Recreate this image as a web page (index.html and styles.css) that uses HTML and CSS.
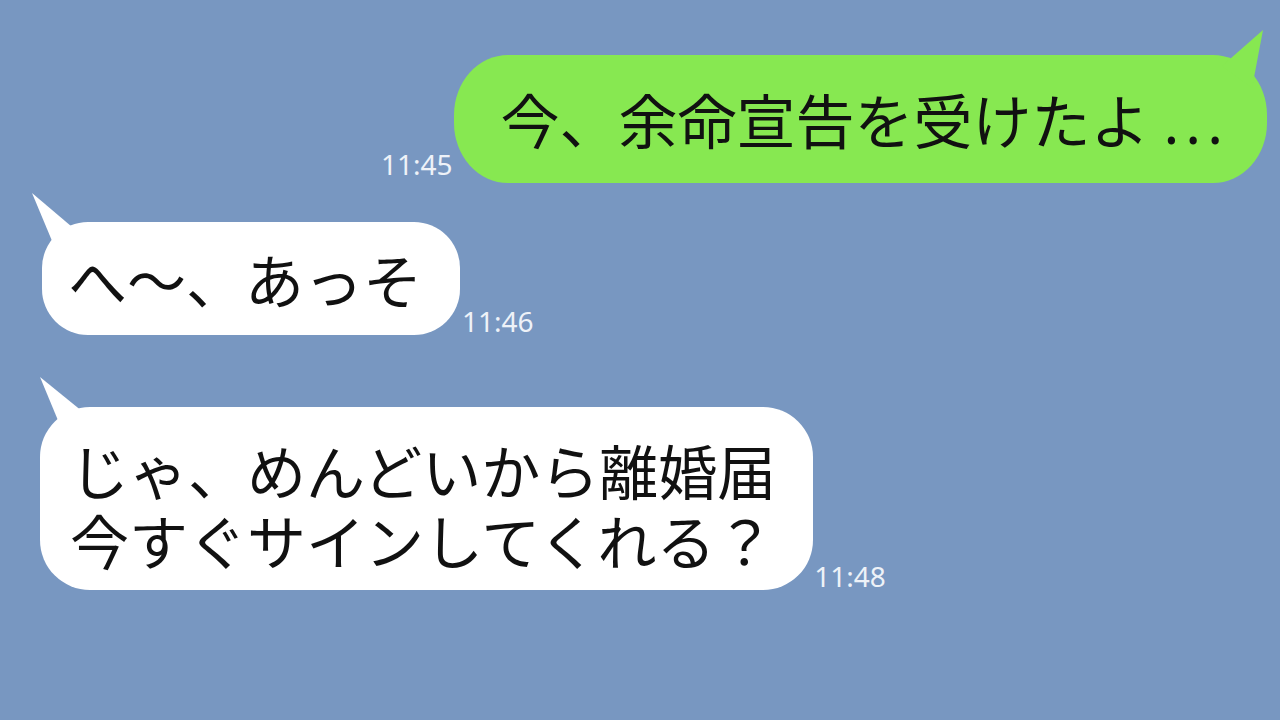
FILE: index.html
```html
<!DOCTYPE html>
<html lang="ja">
<head>
  <meta charset="UTF-8">
  <title>トーク</title>
  <link rel="stylesheet" href="styles.css">
</head>
<body>

<div class="chat">
  <div class="fila fila-mia">
    <span class="hora hora-mia">11:45</span>
    <div class="globo globo-verde">今、余命宣告を受けたよ<span class="puntos">...</span></div>
  </div>

  <div class="fila fila-otro fila-2">
    <div class="globo globo-blanco globo-corto">へ～、あっそ</div>
    <span class="hora hora-2">11:46</span>
  </div>

  <div class="fila fila-otro fila-3">
    <div class="globo globo-blanco globo-largo">じゃ、めんどいから離婚届<br>今すぐサインしてくれる？</div>
    <span class="hora hora-3">11:48</span>
  </div>
</div>

</body>
</html>
```

FILE: styles.css
```css
body {
  margin: 0;
  background-color: #7897c1;
  font-family: "Noto Sans CJK JP", "Noto Sans", sans-serif;
  width: 1280px;
  height: 720px;
  overflow: hidden;
}

.chat {
  display: flex;
  flex-direction: column;
  padding: 55px 13px 0 40px;
}

.fila {
  display: flex;
  align-items: flex-end;
}

.fila-mia {
  justify-content: flex-end;
}

.fila-2 {
  margin-top: 39px;
  padding-left: 2px;
}

.fila-3 {
  margin-top: 72px;
}

.globo {
  position: relative;
  color: #111;
  font-size: 59px;
  white-space: nowrap;
  box-sizing: border-box;
}

.globo::before {
  content: "";
  position: absolute;
}

.puntos {
  font-family: "Noto Sans", sans-serif;
  letter-spacing: 6px;
  margin-left: 14px;
}

.globo-verde {
  background-color: #87e851;
  height: 128px;
  line-height: 128px;
  padding: 0 38px 0 47px;
  border-radius: 54px / 60px;
}

.globo-verde::before {
  background-color: #87e851;
  right: 2px;
  top: -27px;
  width: 50px;
  height: 60px;
  clip-path: polygon(48px 2px, 7px 38px, 37px 60px);
}

.globo-blanco {
  background-color: #fff;
}

.globo-blanco::before {
  background-color: #fff;
}

.globo-corto {
  height: 113px;
  line-height: 113px;
  padding: 0 38px 0 26px;
  border-radius: 46px;
}

.globo-corto::before {
  left: -14px;
  top: -32px;
  width: 50px;
  height: 58px;
  clip-path: polygon(4px 3px, 27px 58px, 50px 42px);
}

.globo-largo {
  padding: 28px 37px 15px 30px;
  line-height: 70px;
  border-radius: 50px;
}

.globo-largo::before {
  left: -4px;
  top: -33px;
  width: 52px;
  height: 56px;
  clip-path: polygon(4px 3px, 26px 56px, 52px 42px);
}

.hora {
  color: #eef2f8;
  font-family: "Noto Sans", sans-serif;
  font-size: 28px;
  line-height: 1;
}

.hora-mia {
  margin: 0 1px 5px 0;
}

.hora-2 {
  margin: 0 0 0 2px;
}

.hora-3 {
  margin: 0 0 0 1px;
}
```
